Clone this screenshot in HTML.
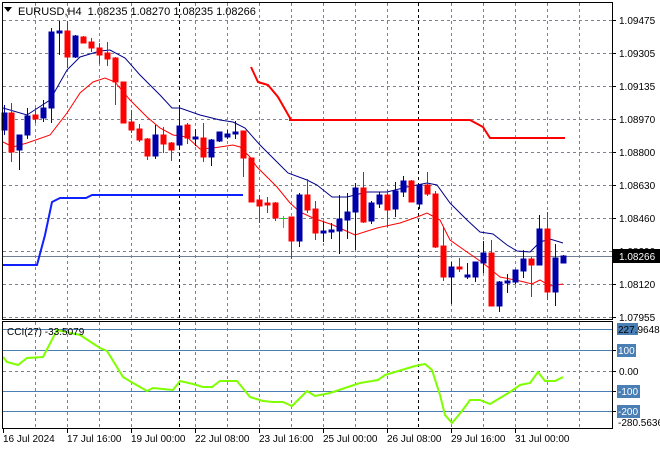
<!DOCTYPE html>
<html><head><meta charset="utf-8"><style>
html,body{margin:0;padding:0;background:#fff;}
svg{display:block;font-family:"Liberation Sans",sans-serif;}
</style></head><body>
<svg width="660" height="450" viewBox="0 0 660 450" xmlns="http://www.w3.org/2000/svg">
<rect width="660" height="450" fill="#fff"/>
<g stroke="#7a8290" stroke-width="1" stroke-dasharray="3,3" fill="none">
<path d="M3 20.5H612M3 53.5H612M3 86.5H612M3 119.5H612M3 152.5H612M3 185.5H612M3 218.5H612M3 251.5H612M3 284.5H612M3 317.5H612"/>
<path d="M35.5 3V319M67.5 3V319M99.5 3V319M131.5 3V319M195.5 3V319M227.5 3V319M259.5 3V319M291.5 3V319M323.5 3V319M355.5 3V319M387.5 3V319M451.5 3V319M483.5 3V319M515.5 3V319M547.5 3V319M579.5 3V319"/>
<path d="M35.5 322V428M67.5 322V428M99.5 322V428M131.5 322V428M195.5 322V428M227.5 322V428M259.5 322V428M291.5 322V428M323.5 322V428M355.5 322V428M387.5 322V428M451.5 322V428M483.5 322V428M515.5 322V428M547.5 322V428M579.5 322V428"/>
<path d="M3 371.5H612"/>
</g>
<g stroke="#000" stroke-dasharray="3,3"><path d="M179.5 3V319M418.5 3V319M179.5 322V428M418.5 322V428"/></g>
<g stroke="#4a7fb5" stroke-width="1"><path d="M3 329.5H612M3 350.5H612M3 391.5H612M3 411.5H612"/></g>
<path d="M3 256.5H612" stroke="#708090"/>
<polyline fill="none" stroke="#1020ff" stroke-width="2" points="3,265 37,265 45,235 52,202 60,198 86,198 92,195 243,195"/>
<polyline fill="none" stroke="#f00" stroke-width="2" points="251,67 258,82 268,85 278,97 290,118 290,120 470,120 483,127 490,138 565,138"/>
<polyline fill="none" stroke="#00008b" stroke-width="1" points="3,108 27,115 50,100 67,70 80,57 100,51 110,50 125,58 140,75 160,95 172,108 180,108 200,115 220,120 233,122 245,128 260,145 275,160 288,173 307,180 317,185 332,197 347,197 367,192 387,192 407,187 427,183 437,185 450,203 467,220 480,232 493,234 507,245 517,251 530,252 540,242 550,239 563,243"/>
<polyline fill="none" stroke="#f00" stroke-width="1" points="3,142 13,147 27,143 50,135 67,113 80,93 93,82 105,78 115,82 130,100 147,117 160,128 173,135 187,137 200,149 213,148 233,145 240,147 250,157 257,167 277,187 290,203 300,212 313,218 333,225 355,235 377,228 400,223 417,217 427,213 440,220 450,240 467,252 483,263 500,277 520,281 532,284 540,280 550,286 563,284"/>
<g stroke="#0000a8" fill="#0000a8" stroke-width="1">
<line x1="4.5" y1="105" x2="4.5" y2="135"/><rect x="2" y="113" width="5" height="17"/>
<line x1="19.5" y1="135" x2="19.5" y2="170"/><rect x="17" y="135" width="5" height="15"/>
<line x1="27.5" y1="108" x2="27.5" y2="139"/><rect x="25" y="116" width="5" height="19"/>
<line x1="43.5" y1="100" x2="43.5" y2="122"/><rect x="41" y="108" width="5" height="10"/>
<line x1="51.5" y1="28" x2="51.5" y2="123"/><rect x="49" y="32" width="5" height="76"/>
<line x1="59.5" y1="21" x2="59.5" y2="55"/><rect x="57" y="31" width="5" height="2"/>
<line x1="75.5" y1="35" x2="75.5" y2="58"/><rect x="73" y="36" width="5" height="21"/>
<line x1="155.5" y1="125" x2="155.5" y2="159"/><rect x="153" y="135" width="5" height="21"/>
<line x1="179.5" y1="107" x2="179.5" y2="148"/><rect x="177" y="126" width="5" height="19"/>
<line x1="195.5" y1="129" x2="195.5" y2="146"/><rect x="193" y="137" width="5" height="2"/>
<line x1="211.5" y1="139" x2="211.5" y2="166"/><rect x="209" y="140" width="5" height="17"/>
<line x1="219.5" y1="132" x2="219.5" y2="142"/><rect x="217" y="132" width="5" height="9"/>
<line x1="227.5" y1="130" x2="227.5" y2="139"/><rect x="225" y="134" width="5" height="3"/>
<line x1="235.5" y1="121" x2="235.5" y2="139"/><rect x="233" y="132" width="5" height="2"/>
<line x1="299.5" y1="193" x2="299.5" y2="247"/><rect x="297" y="195" width="5" height="46"/>
<line x1="323.5" y1="222" x2="323.5" y2="242"/><rect x="321" y="231" width="5" height="2"/>
<line x1="331.5" y1="223" x2="331.5" y2="239"/><rect x="329" y="230" width="5" height="2"/>
<line x1="339.5" y1="195" x2="339.5" y2="254"/><rect x="337" y="219" width="5" height="12"/>
<line x1="347.5" y1="193" x2="347.5" y2="239"/><rect x="345" y="212" width="5" height="8"/>
<line x1="355.5" y1="183" x2="355.5" y2="250"/><rect x="353" y="188" width="5" height="24"/>
<line x1="371.5" y1="201" x2="371.5" y2="224"/><rect x="369" y="203" width="5" height="18"/>
<line x1="379.5" y1="192" x2="379.5" y2="208"/><rect x="377" y="195" width="5" height="9"/>
<line x1="395.5" y1="182" x2="395.5" y2="217"/><rect x="393" y="191" width="5" height="18"/>
<line x1="403.5" y1="176" x2="403.5" y2="197"/><rect x="401" y="181" width="5" height="11"/>
<line x1="419.5" y1="185" x2="419.5" y2="209"/><rect x="417" y="185" width="5" height="19"/>
<line x1="451.5" y1="262" x2="451.5" y2="304"/><rect x="449" y="267" width="5" height="10"/>
<line x1="467.5" y1="263" x2="467.5" y2="279"/><rect x="465" y="275" width="5" height="2"/>
<line x1="475.5" y1="262" x2="475.5" y2="282"/><rect x="473" y="262" width="5" height="15"/>
<line x1="483.5" y1="241" x2="483.5" y2="273"/><rect x="481" y="253" width="5" height="10"/>
<line x1="499.5" y1="281" x2="499.5" y2="312"/><rect x="497" y="282" width="5" height="24"/>
<line x1="507.5" y1="274" x2="507.5" y2="293"/><rect x="505" y="281" width="5" height="2"/>
<line x1="515.5" y1="270" x2="515.5" y2="284"/><rect x="513" y="270" width="5" height="12"/>
<line x1="523.5" y1="250" x2="523.5" y2="278"/><rect x="521" y="259" width="5" height="12"/>
<line x1="539.5" y1="215" x2="539.5" y2="265"/><rect x="537" y="229" width="5" height="36"/>
<line x1="555.5" y1="244" x2="555.5" y2="306"/><rect x="553" y="258" width="5" height="34"/>
<line x1="563.5" y1="255" x2="563.5" y2="263"/><rect x="561" y="256" width="5" height="7"/>
</g>
<g stroke="#f00" fill="#f00" stroke-width="1">
<line x1="11.5" y1="103" x2="11.5" y2="162"/><rect x="9" y="113" width="5" height="39"/>
<line x1="35.5" y1="108" x2="35.5" y2="123"/><rect x="33" y="115" width="5" height="4"/>
<line x1="67.5" y1="21" x2="67.5" y2="68"/><rect x="65" y="31" width="5" height="26"/>
<line x1="83.5" y1="36" x2="83.5" y2="43"/><rect x="81" y="37" width="5" height="6"/>
<line x1="91.5" y1="38" x2="91.5" y2="52"/><rect x="89" y="42" width="5" height="6"/>
<line x1="99.5" y1="43" x2="99.5" y2="64"/><rect x="97" y="48" width="5" height="7"/>
<line x1="107.5" y1="42" x2="107.5" y2="66"/><rect x="105" y="53" width="5" height="6"/>
<line x1="115.5" y1="57" x2="115.5" y2="105"/><rect x="113" y="58" width="5" height="24"/>
<line x1="123.5" y1="82" x2="123.5" y2="123"/><rect x="121" y="82" width="5" height="41"/>
<line x1="131.5" y1="110" x2="131.5" y2="133"/><rect x="129" y="122" width="5" height="8"/>
<line x1="139.5" y1="124" x2="139.5" y2="142"/><rect x="137" y="129" width="5" height="11"/>
<line x1="147.5" y1="138" x2="147.5" y2="160"/><rect x="145" y="139" width="5" height="17"/>
<line x1="163.5" y1="127" x2="163.5" y2="153"/><rect x="161" y="135" width="5" height="9"/>
<line x1="171.5" y1="142" x2="171.5" y2="161"/><rect x="169" y="143" width="5" height="7"/>
<line x1="187.5" y1="123" x2="187.5" y2="144"/><rect x="185" y="125" width="5" height="13"/>
<line x1="203.5" y1="123" x2="203.5" y2="162"/><rect x="201" y="138" width="5" height="19"/>
<line x1="243.5" y1="131" x2="243.5" y2="177"/><rect x="241" y="131" width="5" height="27"/>
<line x1="251.5" y1="158" x2="251.5" y2="202"/><rect x="249" y="158" width="5" height="44"/>
<line x1="259.5" y1="195" x2="259.5" y2="223"/><rect x="257" y="200" width="5" height="6"/>
<line x1="267.5" y1="197" x2="267.5" y2="213"/><rect x="265" y="203" width="5" height="2"/>
<line x1="275.5" y1="202" x2="275.5" y2="221"/><rect x="273" y="203" width="5" height="15"/>
<line x1="291.5" y1="217" x2="291.5" y2="259"/><rect x="289" y="217" width="5" height="24"/>
<line x1="307.5" y1="179" x2="307.5" y2="213"/><rect x="305" y="195" width="5" height="15"/>
<line x1="315.5" y1="201" x2="315.5" y2="240"/><rect x="313" y="209" width="5" height="24"/>
<line x1="363.5" y1="172" x2="363.5" y2="223"/><rect x="361" y="188" width="5" height="34"/>
<line x1="387.5" y1="190" x2="387.5" y2="227"/><rect x="385" y="195" width="5" height="15"/>
<line x1="411.5" y1="180" x2="411.5" y2="202"/><rect x="409" y="181" width="5" height="21"/>
<line x1="427.5" y1="172" x2="427.5" y2="196"/><rect x="425" y="185" width="5" height="9"/>
<line x1="435.5" y1="191" x2="435.5" y2="248"/><rect x="433" y="194" width="5" height="53"/>
<line x1="443.5" y1="227" x2="443.5" y2="281"/><rect x="441" y="246" width="5" height="31"/>
<line x1="459.5" y1="258" x2="459.5" y2="272"/><rect x="457" y="267" width="5" height="2"/>
<line x1="491.5" y1="240" x2="491.5" y2="306"/><rect x="489" y="253" width="5" height="53"/>
<line x1="531.5" y1="257" x2="531.5" y2="297"/><rect x="529" y="259" width="5" height="6"/>
<line x1="547.5" y1="212" x2="547.5" y2="300"/><rect x="545" y="229" width="5" height="63"/>
</g>
<g stroke="#00e000"><line x1="283.5" y1="216" x2="283.5" y2="228"/><line x1="281" y1="218.5" x2="286" y2="218.5"/></g>
<polyline fill="none" stroke="#7fff00" stroke-width="2" points="3,357 7,362 18,365 27,358 43,357 57,330 80,335 100,348 107,351 123,377 133,383 147,391 153,388 173,390 180,381 193,384 203,387 212,387 220,381 237,381 250,397 263,401 273,402 283,402 292,406 307,391 315,396 330,393 345,388 360,383 378,380 385,375 395,372 405,369 415,366 425,364 432,370 440,395 445,415 452,423 462,411 470,400 480,400 490,404 500,398 510,392 520,385 530,383 538,372 545,381 555,381 563,377"/>
<rect x="2.5" y="2.5" width="610" height="317" fill="none" stroke="#000"/>
<rect x="2.5" y="321.5" width="610" height="107" fill="none" stroke="#000"/>
<path d="M4 7H12L8 12Z" fill="#000"/>
<text x="18" y="15" font-size="11" fill="#000">EURUSD,H4&#160;&#160;1.08235 1.08270 1.08235 1.08266</text>
<text x="7" y="335" font-size="10" fill="#000">CCI(27) -33.5079</text>
<g font-size="10" fill="#000">
<g stroke="#000"><path d="M612 20.5h4M612 53.5h4M612 86.5h4M612 119.5h4M612 152.5h4M612 185.5h4M612 218.5h4M612 284.5h4M612 317.5h4M612 350.5h4M612 371.5h4M612 391.5h4M612 411.5h4"/></g>
<text x="619" y="24">1.09475</text>
<text x="619" y="57">1.09305</text>
<text x="619" y="90">1.09135</text>
<text x="619" y="123">1.08970</text>
<text x="619" y="156">1.08800</text>
<text x="619" y="189">1.08630</text>
<text x="619" y="222">1.08460</text>
<text x="619" y="255">1.08290</text>
<text x="619" y="288">1.08120</text>
<text x="619" y="321">1.07955</text>
<rect x="613" y="249" width="47" height="14" fill="#000"/>
<text x="619" y="260" fill="#fff">1.08266</text>
<rect x="617" y="323" width="21" height="12" fill="#4a7fb5"/>
<text x="618" y="333">227.9648</text>
<rect x="617" y="344" width="19" height="13" fill="#4a7fb5"/>
<text x="618" y="354" fill="#fff">100</text>
<text x="619" y="375">0.00</text>
<rect x="617" y="385" width="23" height="13" fill="#4a7fb5"/>
<text x="618" y="395" fill="#fff">-100</text>
<rect x="617" y="405" width="23" height="13" fill="#4a7fb5"/>
<text x="618" y="415" fill="#fff">-200</text>
<text x="618" y="426">-280.5636</text>
</g>
<g stroke="#000"><path d="M3.5 429v4M67.5 429v4M131.5 429v4M195.5 429v4M259.5 429v4M323.5 429v4M387.5 429v4M451.5 429v4M515.5 429v4"/></g>
<g font-size="10" fill="#000">
<text x="3" y="442">16 Jul 2024</text>
<text x="67" y="442">17 Jul 16:00</text>
<text x="131" y="442">19 Jul 00:00</text>
<text x="195" y="442">22 Jul 08:00</text>
<text x="259" y="442">23 Jul 16:00</text>
<text x="323" y="442">25 Jul 00:00</text>
<text x="387" y="442">26 Jul 08:00</text>
<text x="451" y="442">29 Jul 16:00</text>
<text x="515" y="442">31 Jul 00:00</text>
</g>
</svg>
</body></html>
